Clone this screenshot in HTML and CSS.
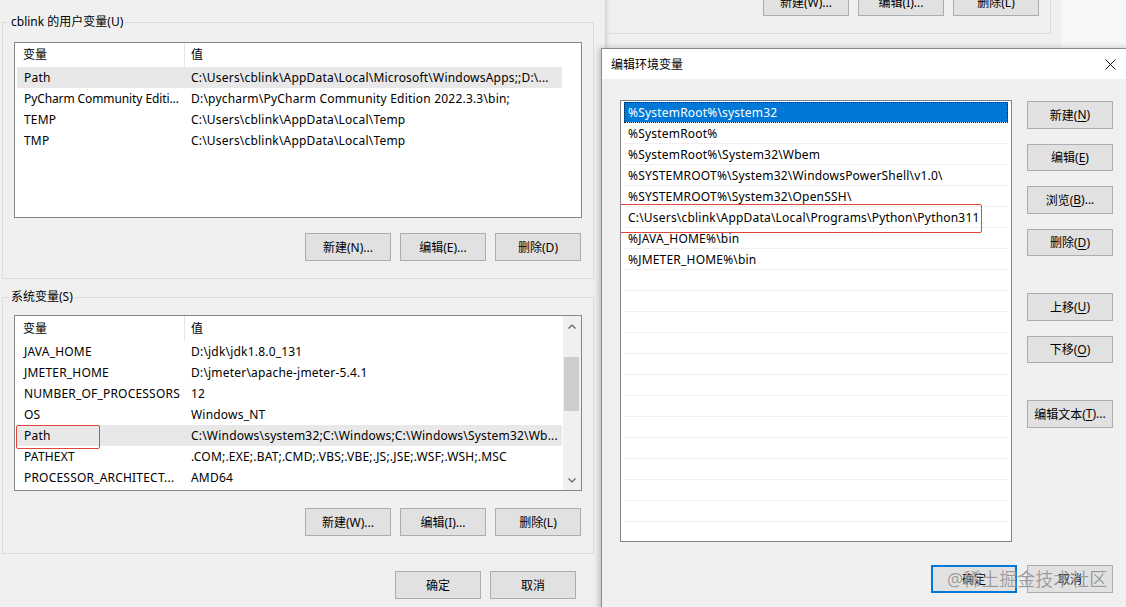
FILE: index.html
```html
<!DOCTYPE html>
<html lang="zh-CN">
<head>
<meta charset="utf-8">
<title>环境变量</title>
<link rel="stylesheet" href="styles.css">
</head>
<body>
<div class="screen">
  <div class="envwin">
    <div class="group group-user">
      <div class="group-title">cblink 的用户变量(U)</div>
      <div class="lv lv-user">
        <div class="lv-body">
          <div class="lv-head"><div class="c1">变量</div><div class="c2">值</div></div>
          <div class="lv-row sel"><div class="c1">Path</div><div class="c2">C:\Users\cblink\AppData\Local\Microsoft\WindowsApps;;D:\...</div></div>
          <div class="lv-row"><div class="c1 tight">PyCharm Community Editi...</div><div class="c2">D:\pycharm\PyCharm Community Edition 2022.3.3\bin;</div></div>
          <div class="lv-row"><div class="c1">TEMP</div><div class="c2">C:\Users\cblink\AppData\Local\Temp</div></div>
          <div class="lv-row"><div class="c1">TMP</div><div class="c2">C:\Users\cblink\AppData\Local\Temp</div></div>
        </div>
      </div>
      <div class="btn-row">
        <button class="btn">新建(N)...</button>
        <button class="btn">编辑(E)...</button>
        <button class="btn">删除(D)</button>
      </div>
    </div>

    <div class="group group-sys">
      <div class="group-title">系统变量(S)</div>
      <div class="lv lv-sys">
        <div class="lv-body">
          <div class="lv-head"><div class="c1">变量</div><div class="c2">值</div></div>
          <div class="lv-row"><div class="c1">JAVA_HOME</div><div class="c2">D:\jdk\jdk1.8.0_131</div></div>
          <div class="lv-row"><div class="c1">JMETER_HOME</div><div class="c2">D:\jmeter\apache-jmeter-5.4.1</div></div>
          <div class="lv-row"><div class="c1">NUMBER_OF_PROCESSORS</div><div class="c2">12</div></div>
          <div class="lv-row"><div class="c1">OS</div><div class="c2">Windows_NT</div></div>
          <div class="lv-row sel marked"><div class="c1">Path</div><div class="c2">C:\Windows\system32;C:\Windows;C:\Windows\System32\Wb...</div></div>
          <div class="lv-row"><div class="c1">PATHEXT</div><div class="c2">.COM;.EXE;.BAT;.CMD;.VBS;.VBE;.JS;.JSE;.WSF;.WSH;.MSC</div></div>
          <div class="lv-row"><div class="c1">PROCESSOR_ARCHITECT...</div><div class="c2">AMD64</div></div>
        </div>
        <div class="sb">
          <div class="sb-btn"><svg width="8" height="5" viewBox="0 0 8 5"><polyline points="0.5,4.5 4,1 7.5,4.5" fill="none" stroke="#606060" stroke-width="1.2"/></svg></div>
          <div class="sb-track"><div class="sb-thumb"></div></div>
          <div class="sb-btn"><svg width="8" height="5" viewBox="0 0 8 5"><polyline points="0.5,0.5 4,4 7.5,0.5" fill="none" stroke="#606060" stroke-width="1.2"/></svg></div>
        </div>
      </div>
      <div class="btn-row">
        <button class="btn">新建(W)...</button>
        <button class="btn">编辑(I)...</button>
        <button class="btn">删除(L)</button>
      </div>
    </div>

    <div class="btn-row footer">
      <button class="btn">确定</button>
      <button class="btn">取消</button>
    </div>
  </div>

  <div class="right">
    <div class="strip">
      <div class="bgwin">
        <div class="bg-group">
          <div class="btn-row bg-btns">
            <button class="btn">新建(W)...</button>
            <button class="btn">编辑(I)...</button>
            <button class="btn">删除(L)</button>
          </div>
        </div>
      </div>
      <div class="strip-rest"></div>
    </div>

    <div class="dialog">
      <div class="dlg-title">
        <span>编辑环境变量</span>
        <span class="dlg-close"><svg width="11" height="11" viewBox="0 0 11 11"><path d="M0.5 0.5 L10.5 10.5 M10.5 0.5 L0.5 10.5" stroke="#111" stroke-width="1" fill="none"/></svg></span>
      </div>
      <div class="dlg-body">
        <div class="dlg-main">
          <div class="dlg-list">
            <div class="pv-row sel">%SystemRoot%\system32</div>
            <div class="pv-row">%SystemRoot%</div>
            <div class="pv-row">%SystemRoot%\System32\Wbem</div>
            <div class="pv-row">%SYSTEMROOT%\System32\WindowsPowerShell\v1.0\</div>
            <div class="pv-row">%SYSTEMROOT%\System32\OpenSSH\</div>
            <div class="pv-row marked">C:\Users\cblink\AppData\Local\Programs\Python\Python311</div>
            <div class="pv-row">%JAVA_HOME%\bin</div>
            <div class="pv-row">%JMETER_HOME%\bin</div>
            <div class="pv-row"></div>
            <div class="pv-row"></div>
            <div class="pv-row"></div>
            <div class="pv-row"></div>
            <div class="pv-row"></div>
            <div class="pv-row"></div>
            <div class="pv-row"></div>
            <div class="pv-row"></div>
            <div class="pv-row"></div>
            <div class="pv-row"></div>
            <div class="pv-row"></div>
            <div class="pv-row"></div>
            <div class="pv-row"></div>
          </div>
          <div class="dlg-side">
            <button class="btn">新建(<u>N</u>)</button>
            <button class="btn">编辑(<u>E</u>)</button>
            <button class="btn">浏览(<u>B</u>)...</button>
            <button class="btn">删除(<u>D</u>)</button>
            <button class="btn sp">上移(<u>U</u>)</button>
            <button class="btn">下移(<u>O</u>)</button>
            <button class="btn sp">编辑文本(<u>T</u>)...</button>
          </div>
        </div>
        <div class="dlg-foot">
          <button class="btn default">确定</button>
          <button class="btn">取消</button>
        </div>
      </div>
    </div>
  </div>

  <div class="watermark">@稀土掘金技术社区</div>
</div>
</body>
</html>
```

FILE: styles.css
```css
* { box-sizing: border-box; }
html, body { margin: 0; padding: 0; }
body {
  font-family: "Noto Sans", "Noto Sans CJK SC", sans-serif;
  font-size: 12px;
  color: #000;
  background: #f0f0f0;
}
.screen {
  display: flex;
  width: 1126px;
  height: 607px;
  overflow: hidden;
  position: relative;
  background: #f0f0f0;
}

/* left window */
.envwin {
  flex: none;
  width: 601px;
  padding-left: 2px;
  background: #f0f0f0;
}
.group {
  width: 592px;
  border: 1px solid #dcdcdc;
}
.group-user { margin-top: 22px; padding-bottom: 17px; }
.group-sys { margin-top: 18px; padding-bottom: 17px; }
.group-title {
  width: fit-content;
  height: 16px;
  margin: -9px 0 0 6px;
  padding: 0 2px;
  line-height: 16px;
  background: #f0f0f0;
  white-space: nowrap;
}
.lv {
  width: 568px;
  height: 176px;
  margin-left: 11px;
  border: 1px solid #828790;
  background: #fff;
  overflow: hidden;
  display: flex;
}
.group-user .lv { margin-top: 12px; }
.group-sys .lv { margin-top: 10px; }
.lv-body { width: 548px; flex: none; }
.lv-head { display: flex; height: 24px; line-height: 24px; }
.lv-sys .lv-head { height: 25px; line-height: 25px; }
.lv-head .c1 { width: 170px; padding-left: 8px; border-right: 1px solid #e5e5e5; }
.lv-head .c2 { flex: 1; padding-left: 6px; }
.lv-row {
  display: flex;
  width: 545px;
  height: 21px;
  margin-left: 2px;
  line-height: 21px;
  position: relative;
  letter-spacing: 0.2px;
}
.lv-row .c1 { width: 168px; flex: none; padding-left: 7px; white-space: nowrap; overflow: hidden; }
.lv-row .c1.tight { letter-spacing: -0.1px; }
.lv-row .c2 { flex: 1; padding-left: 6px; white-space: nowrap; overflow: hidden; }
.lv-row.sel { background: #e8e8e8; }
.lv-row.marked::after {
  content: "";
  position: absolute;
  left: -1px;
  top: 0;
  width: 82px;
  height: 22px;
  border: 1.5px solid #e0463c;
  border-radius: 2px;
}

.sb {
  width: 18px;
  flex: none;
  background: #f0f0f0;
  display: flex;
  flex-direction: column;
}
.sb-btn { height: 20px; display: flex; align-items: center; justify-content: center; }
.sb-track { flex: 1; padding: 21px 2px 0 1px; }
.sb-thumb { height: 54px; background: #cdcdcd; }

.btn {
  width: 86px;
  height: 28px;
  padding: 0;
  margin: 0;
  border: 1px solid #adadad;
  background: #e1e1e1;
  font: inherit;
  color: #000;
  display: flex;
  align-items: center;
  justify-content: center;
  white-space: nowrap;
}
.btn u { text-decoration-thickness: 1px; text-underline-offset: 2px; }
.btn-row {
  display: flex;
  justify-content: flex-end;
  gap: 9px;
  margin-top: 15px;
  margin-right: 12px;
}
.group-sys .btn-row { margin-top: 17px; }
.footer { margin-top: 17px; margin-right: 25px; }

/* right side */
.right {
  flex: none;
  width: 532px;
  display: flex;
  flex-direction: column;
}
.strip {
  height: 48px;
  flex: none;
  display: flex;
  padding-left: 4px;
  background: #f0f0f0;
  overflow: hidden;
}
.bgwin {
  width: 457px;
  flex: none;
  background: linear-gradient(to right, #cfcfcf 0, #e2e2e2 2px, #ececec 4px, #f0f0f0 5px);
}
.bg-group {
  width: 446px;
  height: 34px;
  border-right: 1px solid #dcdcdc;
  border-bottom: 1px solid #dcdcdc;
  display: flex;
  justify-content: flex-end;
  align-items: flex-start;
}
.bg-btns { margin-top: -12px; margin-right: 11px; }
.strip-rest { flex: 1; background: #f7f7f7; }

.dialog {
  flex: none;
  height: 600px;
  border: 1px solid #8a8a8a;
  background: #f0f0f0;
  box-shadow: -2px 0 6px rgba(0, 0, 0, 0.22);
}
.dlg-title {
  height: 30px;
  background: #fff;
  display: flex;
  align-items: center;
  padding-left: 9px;
}
.dlg-close {
  margin-left: auto;
  width: 44px;
  height: 30px;
  display: flex;
  align-items: center;
  justify-content: center;
}
.dlg-body { padding: 21px 19px 0 18px; }
.dlg-main { display: flex; gap: 15px; align-items: flex-start; }
.dlg-list {
  width: 392px;
  height: 442px;
  flex: none;
  border: 1px solid #828282;
  background: #fff;
  padding: 1px 3px 0;
  overflow: hidden;
}
.pv-row {
  height: 21px;
  line-height: 21px;
  border-bottom: 1px solid #efefef;
  padding-left: 4px;
  white-space: nowrap;
  position: relative;
  letter-spacing: 0.2px;
}
.pv-row.sel {
  background: #0078d7;
  color: #fff;
  outline: 1px dotted #1a1a1a;
  outline-offset: -1px;
}
.pv-row.marked::after {
  content: "";
  position: absolute;
  left: -8px;
  top: -3px;
  width: 364px;
  height: 27px;
  border: 1.5px solid #e0463c;
  border-radius: 2px;
}
.dlg-side {
  width: 86px;
  flex: none;
  display: flex;
  flex-direction: column;
  gap: 15px;
  padding-top: 1px;
}
.dlg-side .btn { height: 27.5px; }
.dlg-side .btn.sp { margin-top: 22px; }
.dlg-foot {
  display: flex;
  justify-content: flex-end;
  gap: 10px;
  margin-top: 23px;
}
.btn.default { border: 2px solid #0078d7; }

.watermark {
  position: absolute;
  left: 947px;
  top: 568px;
  font-size: 18px;
  line-height: 22px;
  color: rgba(95, 95, 95, 0.6);
  text-shadow: 0 0 1px rgba(255, 255, 255, 0.7);
  white-space: nowrap;
  pointer-events: none;
}
```
